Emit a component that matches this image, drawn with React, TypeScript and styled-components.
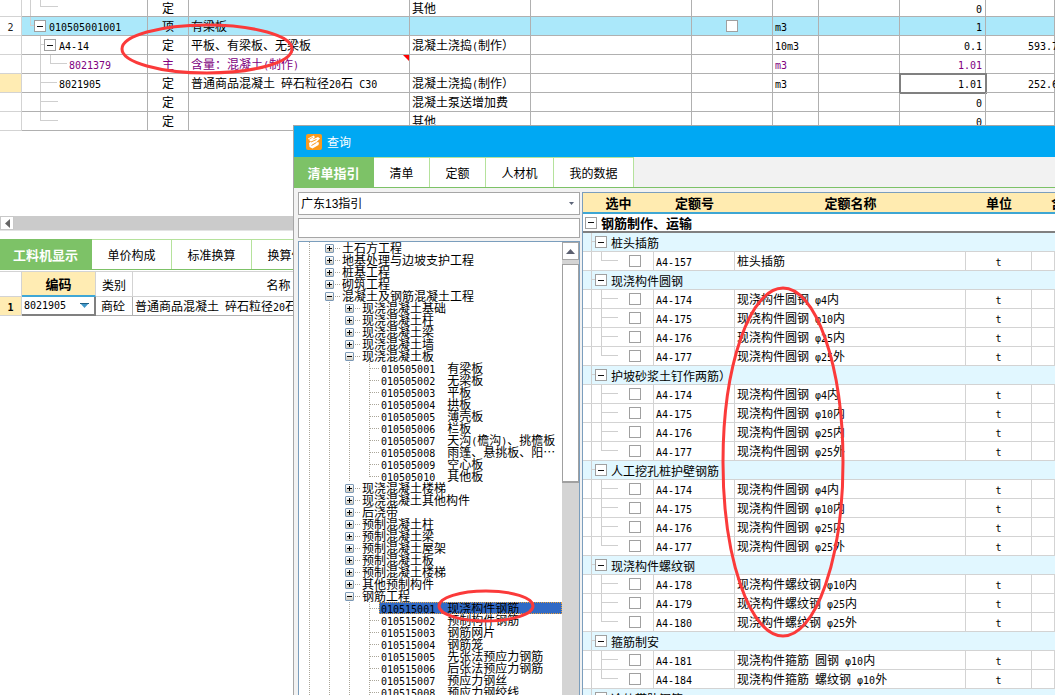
import React from "react";
import styled, { createGlobalStyle, css } from "styled-components";

const cjk = '"Noto Sans CJK SC", "Liberation Sans", sans-serif';

const GlobalStyle = createGlobalStyle`
  *, *::before, *::after { box-sizing: border-box; }
  html, body { margin: 0; padding: 0; background: #fff; overflow: hidden; }
  body { font: 12px/18px ${cjk}; color: #000; }
  button, input, select { font: inherit; color: inherit; margin: 0; padding: 0; border-radius: 0; }
`;

const Latin = styled.span`
  font-family: "DejaVu Sans Mono", monospace;
  font-size: 10px;
  line-height: 8px;
  white-space: pre;
`;

/** Sets half-width runs in the fixed-width face, the rest in the CJK face. */
function Mixed({ children }: { children: string }) {
  return (
    <>
      {children.split(/([\x20-\x7eφ]+)/).map((part, i) =>
        i % 2 ? <Latin key={i}>{part}</Latin> : part
      )}
    </>
  );
}

const Window = styled.main`
  position: relative;
  height: 100vh;
  overflow: hidden;
`;

/* ---------- shared controls ---------- */

const Toggle = styled.button`
  flex: none;
  display: block;
  width: 12px;
  height: 12px;
  border: 1px solid #a0a0a0;
  background: linear-gradient(#111, #111) center / 6px 1px no-repeat #fff;
`;

const Check = styled.input.attrs({ type: "checkbox" })`
  appearance: none;
  display: block;
  width: 12px;
  height: 12px;
  border: 1px solid #a0a0a0;
  background: #fff;
`;

const Guide = styled.svg`
  flex: none;
  display: block;
  fill: none;
  stroke: #cfcfcf;
  shape-rendering: crispEdges;
`;

const Inline = styled.div<{ $gap?: number }>`
  display: flex;
  align-items: center;
  height: 18px;
  gap: ${(p) => p.$gap ?? 0}px;
`;

const TabBar = styled.nav`
  flex: none;
  display: flex;
  height: 31px;
  border-bottom: 1px solid #7dc267;
`;

const Tab = styled.button<{ $active?: boolean; $w: number }>`
  flex: none;
  width: ${(p) => p.$w}px;
  border: 0;
  border-top: 1px solid #b5e29c;
  border-right: 1px solid #b5e29c;
  background: #fff;
  line-height: 28px;
  white-space: nowrap;
  ${(p) =>
    p.$active &&
    css`
      border-color: #7dc267;
      background: #7dc267;
      color: #fff;
      font-weight: bold;
      font-size: 13px;
    `}
`;

/* ---------- bill of quantities ---------- */

const BillPane = styled.section`
  padding-bottom: 85px;
`;

const BillTable = styled.table`
  width: 100%;
  table-layout: fixed;
  border-collapse: separate;
  border-spacing: 0;
`;

const BillCell = styled.td<{
  $align?: "left" | "center" | "right";
  $head?: boolean;
  $mark?: boolean;
  $focus?: boolean;
  $flag?: boolean;
}>`
  position: relative;
  height: 19px;
  padding: 0 ${(p) => (p.$align === "right" ? 3 : 0)}px 0 ${(p) => (p.$align ? 0 : 2)}px;
  border-right: 1px solid #b0b0b0;
  border-bottom: 1px solid #b0b0b0;
  text-align: ${(p) => p.$align ?? "left"};
  line-height: 18px;
  white-space: nowrap;
  ${(p) => p.$head && "border-color: #d3d3d3; background: #fff; color: #222;"}
  ${(p) => p.$mark && "background: #ffecb3;"}
  ${(p) => p.$focus && "outline: 2px solid #808080; outline-offset: -1px;"}
  ${(p) =>
    p.$flag &&
    css`
      &::after {
        content: "";
        position: absolute;
        top: 0;
        right: 0;
        border: 3px solid #f00;
        border-bottom-color: transparent;
        border-left-color: transparent;
      }
    `}
`;

const BillRow = styled.tr<{ $tone?: "current" | "main"; $short?: boolean }>`
  ${(p) => p.$tone === "current" && "background: #abe8fa;"}
  ${(p) => p.$tone === "main" && "color: #800080;"}
  ${(p) =>
    p.$short &&
    css`
      & > td { height: 17px; line-height: 16px; }
      & > td > div { height: 16px; overflow: hidden; }
    `}
`;

const CenterBox = styled.div`
  display: flex;
  justify-content: center;
`;

const TrailingValue = styled.span`
  padding-left: 40px;
`;

const BillCode = styled.span<{ $after?: boolean }>`
  padding-left: ${(p) => (p.$after ? 3 : 0)}px;
`;

type Bill = {
  no?: string;
  width: number;
  lines: string;
  toggle?: boolean;
  code?: string;
  kind: string;
  name?: string;
  job?: string;
  check?: boolean;
  unit?: string;
  qty: string;
  price?: string;
  tone?: "current" | "main";
  mark?: boolean;
};

const bills: Bill[] = [
  { width: 36, lines: "M8.5 0V18M18.5 0V7.5H36", kind: "定", job: "其他", qty: "0" },
  { no: "2", width: 12, lines: "M8.5 0V8.5H12", toggle: true, code: "010505001001", kind: "项", name: "有梁板", check: true, unit: "m3", qty: "1", tone: "current" },
  { width: 22, lines: "M18.5 0V18M18.5 8.5H22", toggle: true, code: "A4-14", kind: "定", name: "平板、有梁板、无梁板", job: "混凝土浇捣(制作）", unit: "10m3", qty: "0.1", price: "593.7" },
  { width: 45, lines: "M18.5 0V18M28.5 0V8.5H45", code: "8021379", kind: "主", name: "含量：混凝土(制作)", unit: "m3", qty: "1.01", tone: "main" },
  { width: 35, lines: "M18.5 0V18M18.5 8.5H35", code: "8021905", kind: "定", name: "普通商品混凝土 碎石粒径20石 C30", job: "混凝土浇捣(制作）", unit: "m3", qty: "1.01", price: "252.6", mark: true },
  { width: 36, lines: "M18.5 0V18M18.5 8.5H36", kind: "定", job: "混凝土泵送增加费", qty: "0" },
  { width: 36, lines: "M18.5 0V8.5H36", kind: "定", job: "其他", qty: "0" },
];

function BillOfQuantities() {
  return (
    <BillPane>
      <BillTable>
        <colgroup>
          {[22, 126, 41, 221, 121, 161, 81, 46, 81, 86].map((w, i) => (
            <col key={i} width={w} />
          ))}
          <col />
        </colgroup>
        <tbody>
          {bills.map((b, i) => (
            <BillRow key={i} $tone={b.tone} $short={i === 0}>
              <BillCell $head $mark={b.mark} $align="center"><Mixed>{b.no ?? ""}</Mixed></BillCell>
              <BillCell $align="left">
                <Inline $gap={b.toggle ? 0 : 2}>
                  <Guide width={b.width} height={18}><path d={b.lines} /></Guide>
                  {b.toggle && <Toggle aria-label="折叠" />}
                  <BillCode $after={b.toggle}><Mixed>{b.code ?? ""}</Mixed></BillCode>
                </Inline>
              </BillCell>
              <BillCell $align="center">{b.kind}</BillCell>
              <BillCell $flag={b.tone === "main"}><Mixed>{b.name ?? ""}</Mixed></BillCell>
              <BillCell><Mixed>{b.job ?? ""}</Mixed></BillCell>
              <BillCell />
              <BillCell $align="center">{b.check && <CenterBox><Check aria-label="选中" /></CenterBox>}</BillCell>
              <BillCell><Mixed>{b.unit ?? ""}</Mixed></BillCell>
              <BillCell />
              <BillCell $align="right" $focus={b.mark}><Mixed>{b.qty}</Mixed></BillCell>
              <BillCell><TrailingValue><Mixed>{b.price ?? ""}</Mixed></TrailingValue></BillCell>
            </BillRow>
          ))}
        </tbody>
      </BillTable>
    </BillPane>
  );
}

/* ---------- resources ---------- */

const HScroll = styled.div`
  display: flex;
  height: 15px;
  margin-bottom: 8px;
  background: #cbcbcb;
  border-bottom: 1px solid #e4e4e4;
`;

const HScrollButton = styled.button`
  display: flex;
  align-items: center;
  justify-content: center;
  width: 14px;
  border: 1px solid #c8c8c8;
  background: #fff;
`;

const ResourceTable = styled.table`
  margin-top: 1px;
  table-layout: fixed;
  width: 425px;
  border-collapse: separate;
  border-spacing: 0;
`;

const ResourceHead = styled.th<{ $on?: boolean }>`
  height: 26px;
  padding: 0;
  border-top: 1px solid #d3d3d3;
  border-right: 1px solid #d3d3d3;
  border-bottom: 1px solid #d3d3d3;
  font-weight: normal;
  line-height: 23px;
  ${(p) => p.$on && "background: #ffecb3; border-bottom: 2px solid #3fa7d6; font-weight: bold; font-size: 13px;"}
`;

const ResourceCell = styled.td<{ $head?: boolean; $focus?: boolean }>`
  height: 19px;
  padding: 0 0 0 2px;
  border-right: 1px solid #b0b0b0;
  border-bottom: 1px solid #b0b0b0;
  line-height: 18px;
  white-space: nowrap;
  ${(p) => p.$head && "padding: 0; background: #ffecb3; border-color: #d3d3d3; text-align: center; font-weight: bold;"}
  ${(p) => p.$focus && "border-right: 2px solid #808080; border-bottom: 2px solid #808080;"}
`;

const CodePicker = styled.div`
  display: flex;
  align-items: center;
  height: 17px;

  select {
    appearance: none;
    flex: 1;
    min-width: 0;
    border: 0;
    background: none;
    font: 10px/17px "DejaVu Sans Mono", monospace;
  }
  svg { flex: none; margin: 0 5px 0 0; }
`;

const Kind = styled.span`
  padding-left: 3px;
`;

function Resources() {
  return (
    <section>
      <HScroll>
        <HScrollButton aria-label="向左滚动">
          <svg width="5" height="9"><path d="M5 0V9L0 4.500Z" fill="#666" /></svg>
        </HScrollButton>
      </HScroll>
      <TabBar>
        <Tab $active $w={92}>工料机显示</Tab>
        <Tab $w={80}>单价构成</Tab>
        <Tab $w={80}>标准换算</Tab>
        <Tab $w={80}>换算信息</Tab>
      </TabBar>
      <ResourceTable>
        <colgroup>
          <col width="22" />
          <col width="74" />
          <col width="37" />
          <col width="292" />
        </colgroup>
        <thead>
          <tr>
            <ResourceHead />
            <ResourceHead $on>编码</ResourceHead>
            <ResourceHead>类别</ResourceHead>
            <ResourceHead>名称</ResourceHead>
          </tr>
        </thead>
        <tbody>
          <tr>
            <ResourceCell $head><Mixed>1</Mixed></ResourceCell>
            <ResourceCell $focus>
              <CodePicker>
                <select aria-label="编码" defaultValue="8021905"><option>8021905</option></select>
                <svg width="9" height="5"><path d="M0 0H9L4.500 5Z" fill="#3f97c9" /><path d="M0 0.500H9" stroke="#1f5f85" /></svg>
              </CodePicker>
            </ResourceCell>
            <ResourceCell>
              <Kind>商砼</Kind>
            </ResourceCell>
            <ResourceCell><Mixed>普通商品混凝土 碎石粒径20石 C30</Mixed></ResourceCell>
          </tr>
        </tbody>
      </ResourceTable>
    </section>
  );
}

/* ---------- query dialog ---------- */

const Dialog = styled.section`
  position: absolute;
  top: 125px;
  left: 293px;
  right: 0;
  bottom: 0;
  display: flex;
  flex-direction: column;
  border: 1px solid #a6a6a6;
  border-right: 0;
  border-bottom: 0;
  background: #f2f2f2;
  overflow: hidden;
`;

const TitleBar = styled.header`
  flex: none;
  display: flex;
  align-items: center;
  gap: 5px;
  height: 31px;
  padding-left: 12px;
  background: #00a8f3;
  color: #fff;
`;

const Title = styled.h1`
  margin: 0;
  font: inherit;
`;

const Body = styled.div`
  flex: 1;
  min-height: 0;
  display: flex;
  gap: 2px;
  padding: 4px 0 0 4px;
`;

const Side = styled.div`
  flex: none;
  width: 282px;
  display: flex;
  flex-direction: column;
  gap: 3px;
`;

const Combo = styled.label`
  flex: none;
  display: flex;
  align-items: center;
  height: 23px;
  padding: 0 5px 0 2px;
  border: 1px solid #a6a6a6;
  background: #fff;

  select {
    appearance: none;
    flex: 1;
    border: 0;
    background: none;
    font-family: "Liberation Sans", ${cjk};
  }
`;

const Search = styled.input`
  flex: none;
  width: 100%;
  height: 20px;
  border: 1px solid #a6a6a6;
  background: #fff;
`;

const TreePane = styled.div`
  flex: 1;
  min-height: 0;
  display: flex;
  border: 1px solid #7b9ebd;
  border-bottom: 0;
  background: #fff;
  overflow: hidden;
`;

const TreeList = styled.ul`
  flex: 1;
  min-width: 0;
  margin: 0;
  padding: 0;
  list-style: none;
`;

const TreeRow = styled.li`
  display: flex;
  align-items: center;
  height: 12px;
  line-height: 12px;
  white-space: nowrap;
`;

const TreeGuide = styled(Guide)`
  stroke: #aaa69a;
  stroke-dasharray: 1 1;
`;

const Expander = styled.button<{ $open?: boolean }>`
  flex: none;
  display: block;
  width: 9px;
  height: 9px;
  border: 1px solid #7b98b5;
  border-radius: 1px;
  background:
    linear-gradient(#000, #000) center / 5px 1px no-repeat,
    linear-gradient(#000, #000) center / ${(p) => (p.$open ? "0 0" : "1px 5px")} no-repeat,
    linear-gradient(#fff, #d0ccc0);
`;

const Label = styled.span<{ $leaf?: boolean; $selected?: boolean }>`
  flex: ${(p) => (p.$leaf ? 1 : "none")};
  height: 12px;
  padding-left: 2px;
  ${(p) => p.$selected && "background: #316ac5; outline: 1px dotted #e8a33d; outline-offset: -1px;"}
`;

type Node = { level: 1 | 2 | 3; text: string; open?: boolean; selected?: boolean };

const leaf = (text: string, selected = false): Node => ({ level: 3, text, selected });
const branch = (level: 1 | 2, text: string, open = false): Node => ({ level, text, open });

const nodes: Node[] = [
  branch(1, "土石方工程"),
  branch(1, "地基处理与边坡支护工程"),
  branch(1, "桩基工程"),
  branch(1, "砌筑工程"),
  branch(1, "混凝土及钢筋混凝土工程", true),
  branch(2, "现浇混凝土基础"),
  branch(2, "现浇混凝土柱"),
  branch(2, "现浇混凝土梁"),
  branch(2, "现浇混凝土墙"),
  branch(2, "现浇混凝土板", true),
  leaf("010505001  有梁板"),
  leaf("010505002  无梁板"),
  leaf("010505003  平板"),
  leaf("010505004  拱板"),
  leaf("010505005  薄壳板"),
  leaf("010505006  栏板"),
  leaf("010505007  天沟(檐沟)、挑檐板"),
  leaf("010505008  雨篷、悬挑板、阳…"),
  leaf("010505009  空心板"),
  leaf("010505010  其他板"),
  branch(2, "现浇混凝土楼梯"),
  branch(2, "现浇混凝土其他构件"),
  branch(2, "后浇带"),
  branch(2, "预制混凝土柱"),
  branch(2, "预制混凝土梁"),
  branch(2, "预制混凝土屋架"),
  branch(2, "预制混凝土板"),
  branch(2, "预制混凝土楼梯"),
  branch(2, "其他预制构件"),
  branch(2, "钢筋工程", true),
  leaf("010515001  现浇构件钢筋", true),
  leaf("010515002  预制构件钢筋"),
  leaf("010515003  钢筋网片"),
  leaf("010515004  钢筋笼"),
  leaf("010515005  先张法预应力钢筋"),
  leaf("010515006  后张法预应力钢筋"),
  leaf("010515007  预应力钢丝"),
  leaf("010515008  预应力钢绞线"),
];

function Tree() {
  return (
    <TreeList>
      {nodes.map((n, i) => {
        if (n.level === 3) {
          const last = nodes[i + 1] && nodes[i + 1].level !== 3;
          return (
            <TreeRow key={i}>
              <TreeGuide width={80} height={12}>
                <path d={`M10.500 0V12M30.500 0V12M50.500 0V12M70.500 0V${last ? 7 : 12}M71 6.500H80`} />
              </TreeGuide>
              <Label $leaf $selected={n.selected}><Mixed>{n.text}</Mixed></Label>
            </TreeRow>
          );
        }
        return (
          <TreeRow key={i}>
            <TreeGuide width={n.level * 20 + 6} height={12}>
              <path d={n.level === 1 ? "M10.500 0V12" : "M10.500 0V12M30.500 0V12"} />
            </TreeGuide>
            <Expander $open={n.open} aria-label={n.open ? "折叠" : "展开"} />
            <TreeGuide width={6} height={12}><path d="M1 6.500H6" /></TreeGuide>
            <Label>{n.text}</Label>
          </TreeRow>
        );
      })}
    </TreeList>
  );
}

const VScroll = styled.div`
  flex: none;
  width: 17px;
  display: flex;
  flex-direction: column;
  background: #d4d4d4;
`;

const VScrollButton = styled.button`
  flex: none;
  display: flex;
  align-items: center;
  justify-content: center;
  height: 18px;
  margin-bottom: 4px;
  border: 1px solid #a6a6a6;
  background: #fff;
`;

const VThumb = styled.div`
  height: 219px;
  border: 1px solid #a0a0a0;
  border-bottom-width: 2px;
  background: #fff;
`;

const QuotaPane = styled.div`
  flex: 1;
  min-width: 0;
  border: 1px solid #7b9ebd;
  border-right: 0;
  border-bottom: 0;
  background: #fff;
  overflow: hidden;
`;

const QuotaTable = styled.table`
  width: 100%;
  table-layout: fixed;
  border-collapse: separate;
  border-spacing: 0;
`;

const QuotaHead = styled.th<{ $cut?: boolean }>`
  height: 21px;
  padding: 0 0 0 ${(p) => (p.$cut ? 19 : 0)}px;
  border-bottom: 2px solid #3ea6d3;
  background: #ffebb0;
  font-size: 13px;
  line-height: 19px;
  text-align: ${(p) => (p.$cut ? "left" : "center")};
  white-space: nowrap;
  overflow: hidden;
`;

const GroupCell = styled.td<{ $root?: boolean }>`
  height: 19px;
  padding: 0;
  border-bottom: ${(p) => (p.$root ? "2px solid #808080" : "1px solid #d3d3d3")};
  background: ${(p) => (p.$root ? "#fff" : "#e1f7ff")};
  font-weight: ${(p) => (p.$root ? "bold" : "normal")};
  font-size: ${(p) => (p.$root ? 13 : 12)}px;
  line-height: 17px;
  white-space: nowrap;
`;

const GroupLine = styled(Inline)<{ $root?: boolean }>`
  height: ${(p) => (p.$root ? 17 : 18)}px;
  padding-left: ${(p) => (p.$root ? 2 : 0)}px;
`;

const GroupName = styled.span`
  padding-left: 4px;
`;

const QuotaCell = styled.td<{ $center?: boolean }>`
  height: 19px;
  padding: 0 0 0 ${(p) => (p.$center ? 0 : 2)}px;
  border-right: 1px solid #d3d3d3;
  border-bottom: 1px solid #d3d3d3;
  text-align: ${(p) => (p.$center ? "center" : "left")};
  line-height: 18px;
  white-space: nowrap;
`;

const PickCell = styled(QuotaCell)`
  padding: 0;
`;

const round = [
  ["A4-174", "现浇构件圆钢 φ4内"],
  ["A4-175", "现浇构件圆钢 φ10内"],
  ["A4-176", "现浇构件圆钢 φ25内"],
  ["A4-177", "现浇构件圆钢 φ25外"],
];

const groups = [
  { name: "桩头插筋", items: [["A4-157", "桩头插筋"]] },
  { name: "现浇构件圆钢", items: round },
  { name: "护坡砂浆土钉作两筋）", items: round },
  { name: "人工挖孔桩护壁钢筋", items: round },
  {
    name: "现浇构件螺纹钢",
    items: [
      ["A4-178", "现浇构件螺纹钢 φ10内"],
      ["A4-179", "现浇构件螺纹钢 φ25内"],
      ["A4-180", "现浇构件螺纹钢 φ25外"],
    ],
  },
  {
    name: "箍筋制安",
    items: [
      ["A4-181", "现浇构件箍筋 圆钢 φ10内"],
      ["A4-184", "现浇构件箍筋 螺纹钢 φ10外"],
    ],
  },
  { name: "冷轧带肋钢筋", items: [] as string[][] },
];

function Quotas() {
  return (
    <QuotaTable>
      <colgroup>
        <col width="71" />
        <col width="81" />
        <col />
        <col width="66" />
        <col width="23" />
      </colgroup>
      <thead>
        <tr>
          <QuotaHead>选中</QuotaHead>
          <QuotaHead>定额号</QuotaHead>
          <QuotaHead>定额名称</QuotaHead>
          <QuotaHead>单位</QuotaHead>
          <QuotaHead $cut>含量</QuotaHead>
        </tr>
      </thead>
      <tbody>
        <tr>
          <GroupCell $root colSpan={5}>
            <GroupLine $root>
              <Toggle aria-label="折叠" />
              <GroupName>钢筋制作、运输</GroupName>
            </GroupLine>
          </GroupCell>
        </tr>
        {groups.map((g) => (
          <React.Fragment key={g.name}>
            <tr>
              <GroupCell colSpan={5}>
                <GroupLine>
                  <Guide width={12} height={18}><path d="M8.500 0V18M8.500 8.500H12" /></Guide>
                  <Toggle aria-label="折叠" />
                  <GroupName>{g.name}</GroupName>
                </GroupLine>
              </GroupCell>
            </tr>
            {g.items.map(([code, name], i) => (
              <tr key={code}>
                <PickCell>
                  <Inline $gap={11}>
                    <Guide width={35} height={18}>
                      <path d={`M8.500 0V18M18.500 0V${i === g.items.length - 1 ? 9 : 18}M18.500 8.500H35`} />
                    </Guide>
                    <Check aria-label={code} />
                  </Inline>
                </PickCell>
                <QuotaCell><Mixed>{code}</Mixed></QuotaCell>
                <QuotaCell><Mixed>{name}</Mixed></QuotaCell>
                <QuotaCell $center><Mixed>t</Mixed></QuotaCell>
                <QuotaCell />
              </tr>
            ))}
          </React.Fragment>
        ))}
      </tbody>
    </QuotaTable>
  );
}

function QueryDialog() {
  return (
    <Dialog aria-label="查询">
      <TitleBar>
        <svg width="16" height="16" viewBox="0 0 16 16">
          <rect width="16" height="16" rx="2" fill="#fa9a1c" />
          <g fill="#fff">
            <path d="M2 4.500L7.500 1.500L9 3L6.500 5.500L12 3L14 4.500L10.500 8L13 8.500L12.500 11L6.500 14.500L3.500 13L3 9L5 7.500L3.500 6.500Z" />
          </g>
          <g fill="none" stroke="#fa9a1c">
            <path d="M5 8L10.500 5.500" />
            <path d="M5.500 11.500L10.500 8.500" />
            <path d="M3 5.500L7 3" strokeWidth="0.700" />
          </g>
        </svg>
        <Title>查询</Title>
      </TitleBar>
      <TabBar>
        <Tab $active $w={80}>清单指引</Tab>
        <Tab $w={56}>清单</Tab>
        <Tab $w={56}>定额</Tab>
        <Tab $w={68}>人材机</Tab>
        <Tab $w={80}>我的数据</Tab>
      </TabBar>
      <Body>
        <Side>
          <Combo>
            <select aria-label="指引库" defaultValue="广东13指引"><option>广东13指引</option></select>
            <svg width="5" height="3"><path d="M0 0H5L2.500 3Z" fill="#5c6478" /></svg>
          </Combo>
          <Search aria-label="查找" />
          <TreePane>
            <Tree />
            <VScroll>
              <VScrollButton aria-label="向上滚动">
                <svg width="9" height="5"><path d="M0 5H9L4.500 0Z" fill="#5c6070" /></svg>
              </VScrollButton>
              <VThumb />
            </VScroll>
          </TreePane>
        </Side>
        <QuotaPane><Quotas /></QuotaPane>
      </Body>
    </Dialog>
  );
}

/* ---------- hand-drawn red markers ---------- */

const Marks = styled.svg`
  position: absolute;
  top: 0;
  left: 0;
  width: 100%;
  height: 100%;
  pointer-events: none;
  fill: none;
  stroke: #fb3a3a;
  stroke-width: 3;
`;

export default function App() {
  return (
    <Window lang="zh-CN">
      <GlobalStyle />
      <BillOfQuantities />
      <Resources />
      <QueryDialog />
      <Marks>
        <ellipse cx="207" cy="49" rx="85" ry="24" />
        <ellipse cx="486" cy="606" rx="47" ry="15" />
        <ellipse cx="783" cy="462" rx="60" ry="174" />
      </Marks>
    </Window>
  );
}
